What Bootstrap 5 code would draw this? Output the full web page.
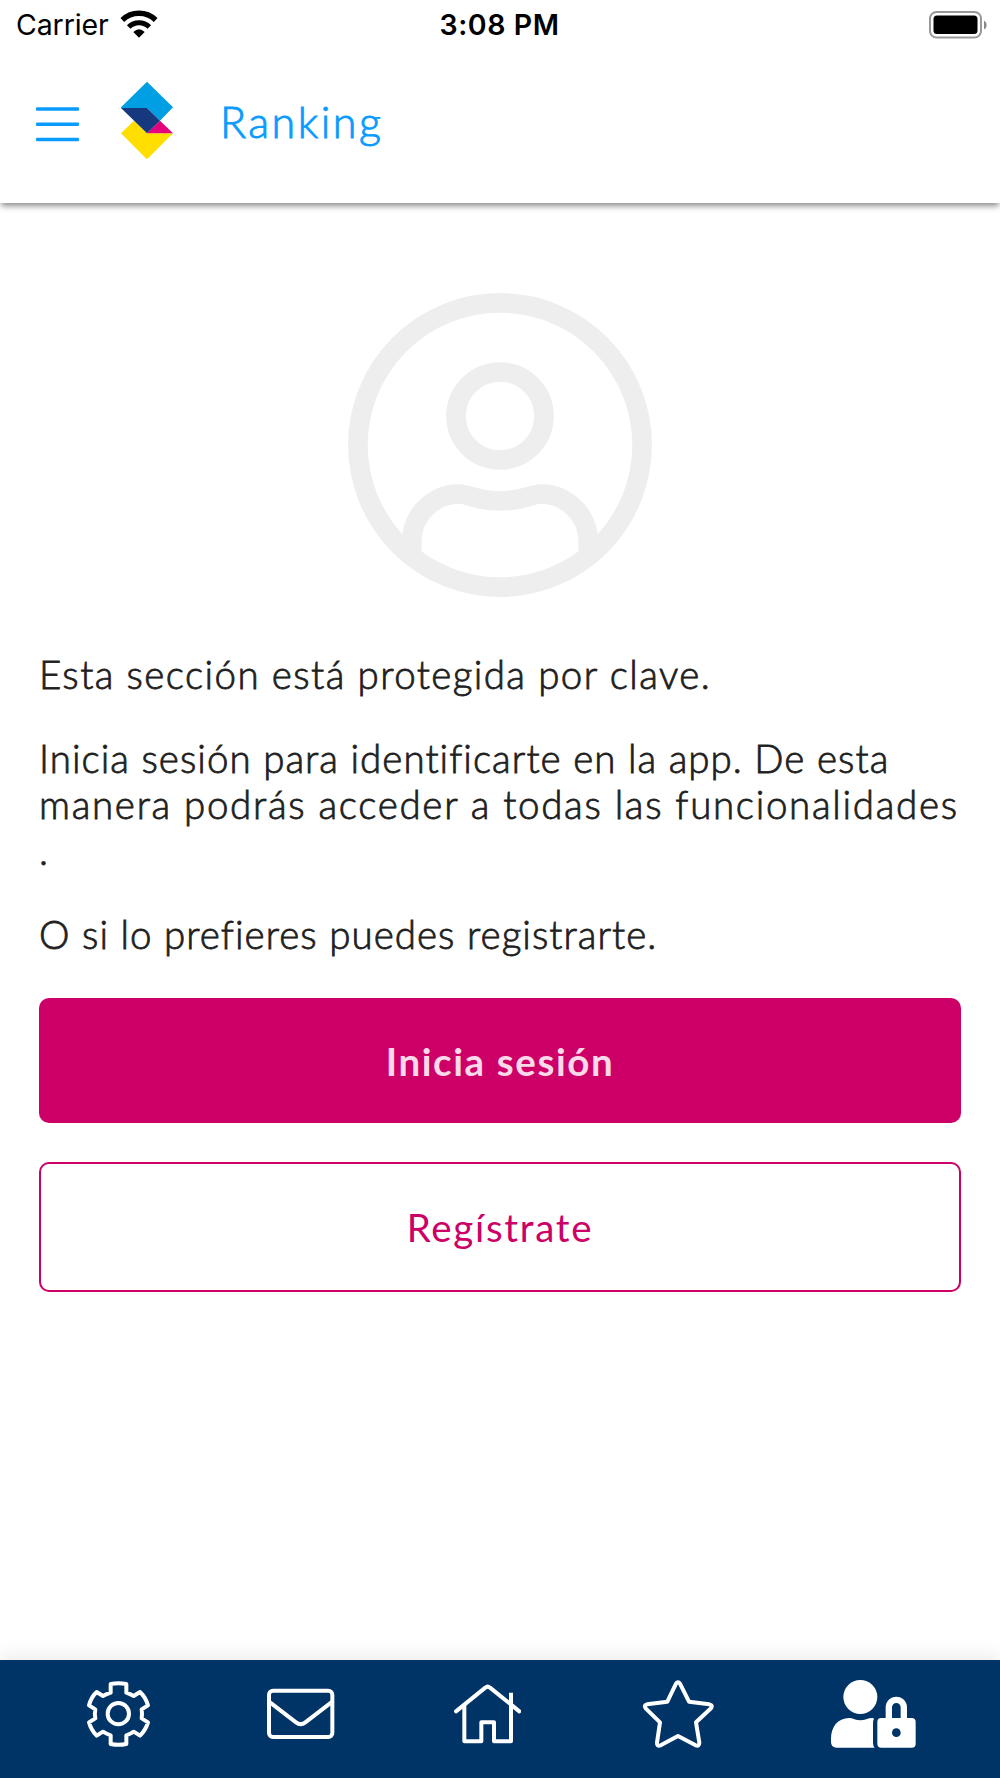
<!DOCTYPE html>
<html lang="es">
<head>
<meta charset="utf-8">
<meta name="viewport" content="width=device-width, initial-scale=1">
<title>Ranking</title>
<link href="https://cdn.jsdelivr.net/npm/bootstrap@5.3.0/dist/css/bootstrap.min.css" rel="stylesheet">
<style>
  body { font-family: Lato, "Open Sans", sans-serif; color: #1f1f1f; }
  .app-shell { height: 1778px; }
  .status-line { height: 50px; padding: 0 12px 0 16px; font-family: Inter, sans-serif; font-size: 28.5px; line-height: 50px; color: #000; }
  .status-start { width: 415px; }
  .status-end { width: 420px; }
  .wifi { margin-left: 11px; }
  .status-line .carrier { letter-spacing: -.1px; }
  .status-line .clock { font-weight: 600; letter-spacing: .55px; }
  .app-header { height: 203px; box-shadow: 0 4px 6px -1px rgba(0,0,0,.45); z-index: 1; }
  .title-line { height: 78px; margin-top: 31px; padding-left: 36px; }
  .menu-btn { width: 43px; height: 35px; margin-top: 26px; }
  .app-logo { margin-left: 42px; }
  .app-title { margin: 15px 0 0 47px; font-size: 43px; line-height: 52px; color: #0a9bff; font-weight: 300; letter-spacing: 2.5px; -webkit-text-stroke: .9px currentColor; }
  .app-body { padding: 90px 39px 0; font-size: 38.5px; line-height: 46px; }
  .app-body p { margin: 38px 0 0; font-weight: 300; letter-spacing: 1.03px; -webkit-text-stroke: .8px currentColor; }
  .app-body p:first-of-type { margin-top: 54px; letter-spacing: 1.4px; }
  .app-body p span { display: block; white-space: nowrap; }
  .app-body .wide-line { letter-spacing: 1.69px; }
  .cta { font-size: 38.5px; line-height: 46px; border-radius: 10px; --bs-btn-border-width: 2px; }
  .cta-fill { height: 125px; margin-top: 41px; color: #fbd9e9; background: #cc0066; font-weight: 700; letter-spacing: 1.6px; }
  .cta-line { height: 130px; margin-top: 39px; color: #cc0066; border-color: #cc0066; letter-spacing: 1.7px; }
  .app-footer { height: 118.5px; padding: 16.5px 0 0 85px; background: #003366; box-shadow: 0 -5px 18px rgba(0,0,0,.08); }
  .app-footer svg { height: 78px; display: block; }
  .tab-mail { margin-left: 112.7px; }
  .tab-home { margin-left: 119px; }
  .tab-star { margin-left: 121.3px; }
  .tab-user { margin-left: 115px; }
  .ln { fill: none; stroke: #fff; stroke-width: 12; stroke-linejoin: round; }
</style>
</head>
<body class="bg-white">
<div class="app-shell d-flex flex-column overflow-hidden">
  <header class="app-header flex-shrink-0 bg-white position-relative">
    <div class="status-line d-flex align-items-center justify-content-between">
      <div class="status-start d-flex align-items-center"><span class="carrier">Carrier</span>
        <svg class="wifi" width="38" height="30" viewBox="359 29 114 90" fill="none" stroke="#000"><path d="M366 59A72 72 0 0 1 466 59" stroke-width="16"/><path d="M385 80A44 44 0 0 1 447 80" stroke-width="15"/><path d="M399 95Q416 79 433 95L416 112Z" fill="#000" stroke="none"/></svg>
      </div>
      <span class="clock">3:08 PM</span>
      <div class="status-end d-flex justify-content-end">
        <svg width="60" height="28" viewBox="0 0 60 28"><rect x="2" y="1" width="51" height="25.5" rx="6.5" fill="none" stroke="#999" stroke-width="2"/><rect x="5.500" y="4.5" width="44" height="18.5" rx="3.5"/><path d="M56 9.5Q58.7 11 58.7 14T56 18.5Z" fill="#888"/></svg>
      </div>
    </div>
    <div class="title-line d-flex align-items-start">
      <button class="menu-btn btn p-0 border-0 d-flex" aria-label="Menú"><svg width="43" height="35" fill="#0a9bff"><rect y=".2" width="43" height="3.500" rx="1"/><rect y="15.500" width="43" height="3.500" rx="1"/><rect y="30.700" width="43" height="3.500" rx="1"/></svg></button>
      <svg class="app-logo" width="52" height="78" viewBox="364 243 156 234"><path fill="#ffde00" d="M403 362L442 400H520L442 478L364 400Z"/><path fill="#e5007e" d="M481 362L520 400H442Z"/><path fill="#009fe3" d="M442 245L520 322L481 362L442 324H364V322Z"/><path fill="#15387f" d="M364 324H442L481 362L442 400Z"/></svg>
      <span class="app-title">Ranking</span>
    </div>
  </header>

  <main class="app-body flex-grow-1">
    <svg class="d-block mx-auto" width="304" height="304" viewBox="348 293 304 304" fill="none" stroke="#eee" stroke-width="19.7"><circle cx="500" cy="445" r="142.1"/><circle cx="500" cy="416" r="44"/><path d="M411.7 554V541A47.5 47.5 0 0 1 459 494C469 494 476 501 500 501S531 494 541 494A47.5 47.5 0 0 1 588.3 541V554"/></svg>
    <p><span>Esta sección está protegida por clave.</span></p>
    <p><span>Inicia sesión para identificarte en la app. De esta</span><span class="wide-line">manera podrás acceder a todas las funcionalidades</span><span>.</span></p>
    <p><span>O si lo prefieres puedes registrarte.</span></p>
    <button class="cta cta-fill btn w-100 d-block">Inicia sesión</button>
    <button class="cta cta-line btn w-100 d-block">Regístrate</button>
  </main>

  <footer class="app-footer flex-shrink-0 d-flex align-items-start">
    <svg width="67" viewBox="75 108 201 234"><path class="ln" d="M152 132Q175 128 199 132V158Q210 162 221 168L240 156Q257 172 264 196L245 208Q247 222 245 235L264 247Q257 270 240 287L221 275Q211 282 199 286V312Q175 317 152 312V286Q140 282 129 275L110 287Q93 270 87 247L106 235Q103 222 106 208L87 196Q93 172 110 156L129 168Q140 162 152 158Z"/><circle class="ln" cx="175" cy="221" r="32"/></svg>
    <svg class="tab-mail" width="70" viewBox="614 108 210 234"><rect class="ln" x="626" y="152" width="190" height="139" rx="12"/><path class="ln" d="M626 185L707 247Q721 258 735 247L816 185"/></svg>
    <svg class="tab-home" width="67" viewBox="71 108 201 234"><path class="ln" stroke-linecap="round" d="M77 214L165 143Q172 137 179 143L267 214"/><path class="ln" d="M102 195V304H153V247H191V304H242V158"/></svg>
    <svg class="tab-star" width="73" viewBox="636 108 219 234"><path class="ln" d="M738 131Q744 122 750 131L777 185L838 193Q850 196 843 205L798 247L808 308Q808 320 797 316L744 288L692 316Q680 320 681 308L690 247L647 205Q640 196 651 193L712 185Z"/></svg>
    <svg class="tab-user" width="88" viewBox="90 108 264 234" fill="#fff"><circle cx="181" cy="171" r="51"/><path d="M93 296C93 262 112 234 148 234C158 234 168 241 181 241S204 234 216 234Q222 234 222 236Q219 240 219 250V308Q219 318 224 323H108Q93 321 93 306Z"/><path d="M266.500 240V202a22.500 22.500 0 0 1 45 0V240" fill="none" stroke="#fff" stroke-width="19"/><rect x="232" y="234" width="115" height="89" rx="12"/><circle cx="289" cy="278" r="13" fill="#036"/></svg>
  </footer>
</div>
<script src="https://cdn.jsdelivr.net/npm/bootstrap@5.3.0/dist/js/bootstrap.bundle.min.js"></script>
</body>
</html>
